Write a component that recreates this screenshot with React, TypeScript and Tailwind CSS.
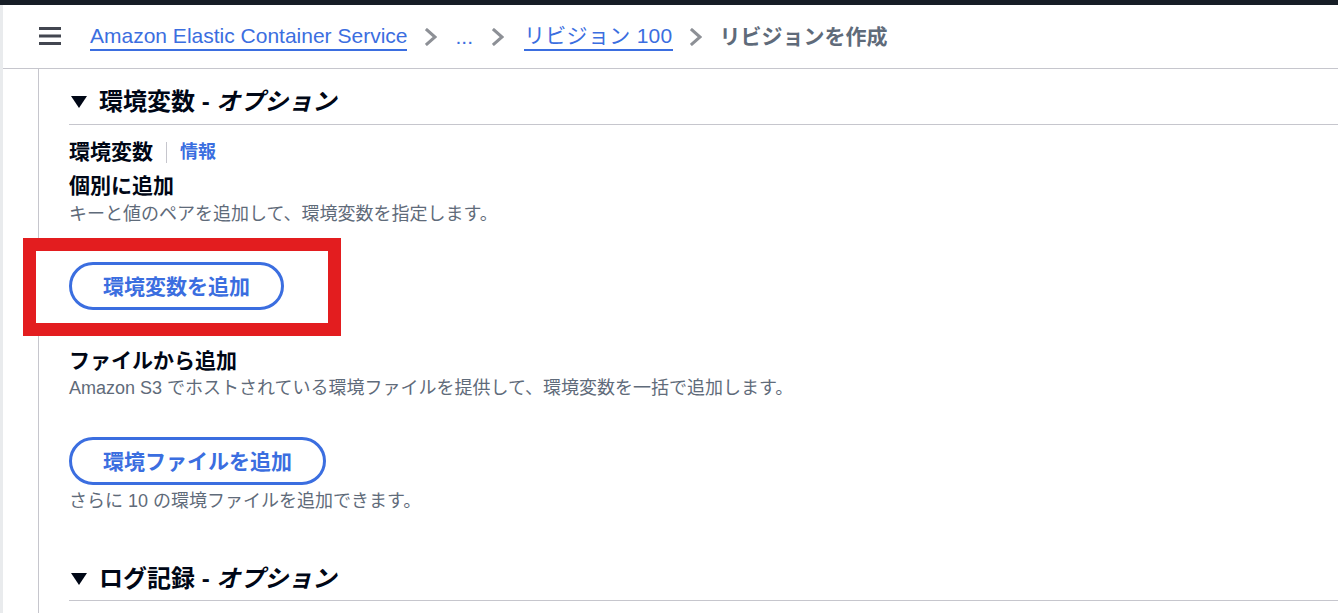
import React from 'react';

const BLUE = 'text-[#3b6ee0]';

function Chevron() {
  return (
    <svg width="12" height="18" viewBox="0 0 12 18" className="shrink-0">
      <path d="M2 2 L10 9 L2 16" fill="none" stroke="#8d9096" strokeWidth="3" strokeLinecap="square" />
    </svg>
  );
}

function Hamburger() {
  return (
    <svg width="22" height="20" viewBox="0 0 22 20" className="shrink-0">
      <rect x="0" y="0" width="22" height="3" fill="#424650" />
      <rect x="0" y="7.5" width="22" height="3" fill="#424650" />
      <rect x="0" y="15" width="22" height="3" fill="#424650" />
    </svg>
  );
}

function SectionHeading({ title }: { title: string }) {
  return (
    <div className="flex items-center h-[32px]">
      <svg width="16" height="12" viewBox="0 0 16 12" className="ml-[2px] mr-[12px] shrink-0">
        <path d="M0 0 H16 L8 12 Z" fill="#000716" />
      </svg>
      <h2 className="text-[24px] leading-[32px] font-bold text-[#000716] whitespace-nowrap">
        {title} - <span className="italic">オプション</span>
      </h2>
    </div>
  );
}

function OutlineButton({ label }: { label: string }) {
  return (
    <button className="relative z-10 h-[48px] px-[31px] rounded-full border-[3px] border-[#3b6ee0] bg-white text-[21px] font-bold text-[#3b6ee0] leading-none whitespace-nowrap">
      {label}
    </button>
  );
}

export default function App() {
  return (
    <div className="relative h-[613px] w-full overflow-hidden bg-white font-['Liberation_Sans','Noto_Sans_CJK_JP',sans-serif]">
      <div className="h-[5px] bg-[#161d26]" />
      <div className="flex h-full">
        <div className="w-[3px] shrink-0 bg-[#e9ebed]" />
        <div className="flex-1 flex flex-col">
          <header className="h-[64px] shrink-0 border-b border-[#c6c6cd] flex items-center pl-[36px]">
            <Hamburger />
            <nav className="ml-[29px] flex items-center text-[21px] leading-[28px] whitespace-nowrap">
              <a className={`${BLUE} border-b-2 border-[#3b6ee0] leading-[26px]`}>Amazon Elastic Container Service</a>
              <span className="mx-[18px] flex"><Chevron /></span>
              <span className={BLUE}>...</span>
              <span className="ml-[19px] mr-[20px] flex"><Chevron /></span>
              <a className={`${BLUE} border-b-2 border-[#3b6ee0] leading-[26px] tracking-[0.3px]`}>リビジョン 100</a>
              <span className="ml-[17px] mr-[18px] flex"><Chevron /></span>
              <span className="font-bold text-[#5f6b7a]">リビジョンを作成</span>
            </nav>
          </header>

          <div className="flex flex-1">
            <div className="w-[36px] shrink-0 border-r border-[#c6c6cd]" />
            <main className="flex-1 pl-[30px]">
              <div className="pt-[17px] pb-[6px] border-b border-[#c6c6cd]">
                <SectionHeading title="環境変数" />
              </div>

              <div className="mt-[13px] flex items-center h-[28px]">
                <span className="text-[21px] font-bold text-[#000716]">環境変数</span>
                <span className="ml-[13px] mr-[13px] h-[21px] w-px bg-[#c6c6cd]" />
                <a className={`${BLUE} text-[18px] font-bold`}>情報</a>
              </div>

              <h3 className="mt-[6px] text-[21px] leading-[28px] font-bold text-[#000716]">個別に追加</h3>
              <p className="mt-[1px] text-[18px] leading-[26px] text-[#5f6b7a]">キーと値のペアを追加して、環境変数を指定します。</p>
              <div className="mt-[35px]">
                <OutlineButton label="環境変数を追加" />
              </div>

              <h3 className="mt-[37px] text-[21px] leading-[28px] font-bold text-[#000716]">ファイルから追加</h3>
              <p className="text-[18px] leading-[26px] text-[#5f6b7a]">
                Amazon S3 でホストされている環境ファイルを提供して、環境変数を一括で追加します。
              </p>
              <div className="mt-[36px]">
                <OutlineButton label="環境ファイルを追加" />
              </div>
              <p className="mt-[3px] text-[18px] leading-[26px] text-[#5f6b7a]">さらに 10 の環境ファイルを追加できます。</p>

              <div className="mt-[49px] pb-[5px] border-b border-[#c6c6cd]">
                <SectionHeading title="ログ記録" />
              </div>
            </main>
          </div>
        </div>
      </div>

      {/* red annotation frame */}
      <div className="absolute left-[23px] top-[238px] w-[318px] h-[98px] border-[13px] border-[#e31d1f] bg-white" />
    </div>
  );
}
